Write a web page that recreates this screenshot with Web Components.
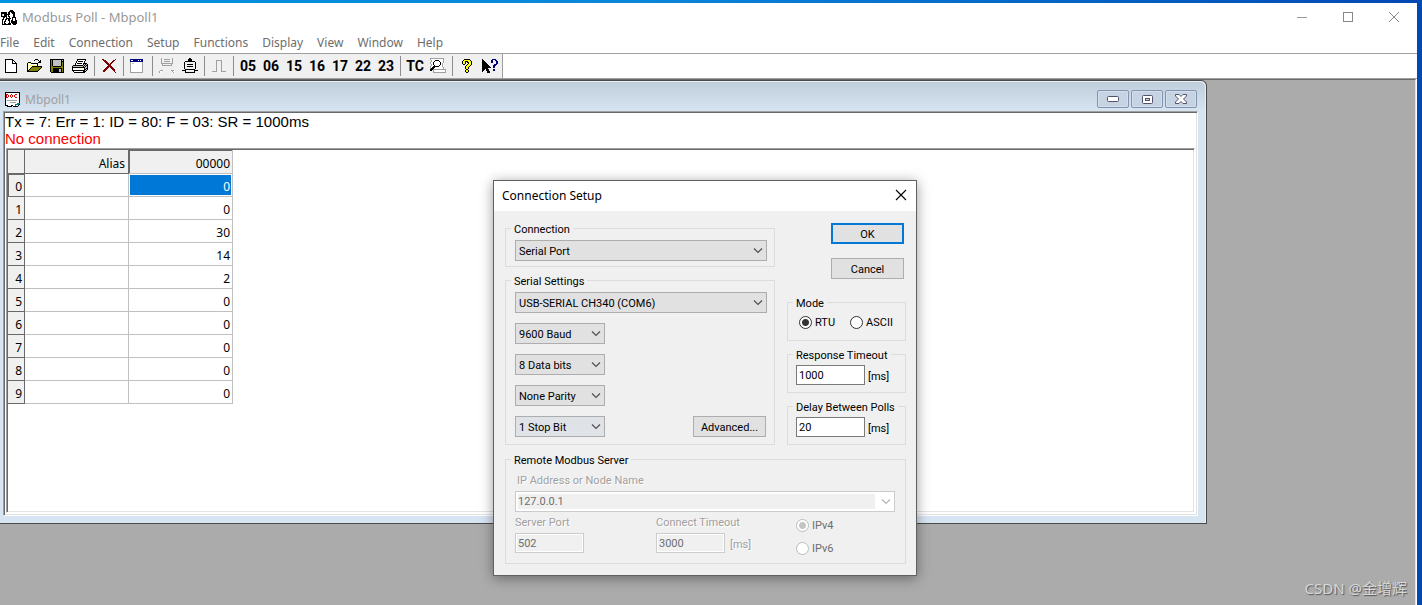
<!DOCTYPE html>
<html lang="en">
<head>
<meta charset="utf-8">
<title>Modbus Poll - Mbpoll1</title>
<style>
body {
  margin: 0;
  font-family: 'Noto Sans', 'Noto Sans CJK SC', sans-serif;
  font-size: 12px;
  color: #000;
  background: linear-gradient(90deg, #0093e0, #0a86da 45%, #0048b4);
}
</style>
</head>
<body>
<modbus-app></modbus-app>
<script>
// pixel icons: one letter per pixel
const COLORS = {k:'#000', w:'#fff', g:'#c0c0c0', d:'#a0a0a0', o:'#808000', y:'#ffff80', Y:'#ffff00', r:'#800000', R:'#e00000', b:'#000080', t:'#008080'}
const ICONS = {
  app: `
.........kkk....
........kkkkk...
kkkkkk.kk.kkkk..
kkkkkk.kk..kkk..
kgwkkkkkk...kk..
kgwkkk.k....kk..
kkkkkk.kk...kk..
..kk.k..k..kkkk.
..k..kkkkk.kwwk.
.kk.kk.kk..kwwk.
.k..k..kk.kkwwkk
.k.kk...k.kkkkkk
.k.k....k.kkkkkk
.k.kk..kkk.kkkkk
.kkkkkkkkk..kkk.`,
  create: `
kkkkkkkk....
kwwwwwwkk...
kwwwwwwkwk..
kwwwwwwkwwk.
kwwwwwwkkkkk
kwwwwwwwwwwk
kwwwwwwwwwwk
kwwwwwwwwwwk
kwwwwwwwwwwk
kwwwwwwwwwwk
kwwwwwwwwwwk
kwwwwwwwwwwk
kwwwwwwwwwwk
kkkkkkkkkkkk`,
  open: `
.........kkk....
........k...k.k.
.............kk.
..kkk.......kkk.
.kywykkkkkkk....
.kwywywywywk....
.kywywywywyk....
.kwywykkkkkkkkkk
.kywykoooooooook
.kwykoooooooook.
.kykoooooooook..
.kkoooooooook...
.kkkkkkkkkkk....`,
  save: `
kkkkkkkkkkkkkk
kokggggggggkgk
kokggggggggkkk
kokggggggggkok
kokggggggggkok
kokggggggggkok
kokggggggggkok
kookkkkkkkkook
kooooooooooook
kookkkkkkkkkok
kookkkkkkggkok
kookkkkkkggkok
kookkkkkkggkok
.kkkkkkkkkkkkk`,
  print: `
.....kkkkkkkkk..
.....kwwwwwwwk..
....kwkkkkkwk...
....kwwwwwwwk...
...kwkkkkkwkkkk.
...kwwwwwwwkgkgk
.kkkkkkkkkkgkgkk
kggggggggggkgkgk
kkkkkkkkkkkkkggk
kwwwwwwyyywwkgkk
kwwwwwwwwwwwkkgk
kkkkkkkkkkkkkgk.
.kwwwwwwwwwkkk..
..kkkkkkkkkkk...`,
  disconnect: `
rr...........r
.rrr.......rr.
..rrr.....rr..
...rrr...rr...
....rrr.rr....
.....rrrr.....
......rrr.....
.....rrrrr....
....rrr.rrr...
...rrr...rrr..
..rrr.....rrr.
.rrr.......rr.
.rr.........r.
.............r`,
  setup: `
bbbbbbbbbbbbb...
bwwbbbbbwbwbb...
bbbbbbbbbbbbb...
dwwwwwwwwwwwd...
dwggwwwwwwwwd...
dwwwwwwwwwwwd...
dwwwwwwwwwwwd...
dwwwwwwwwwwwd...
dwwwwwwwwwwwd...
dwwwwwwwwwwwd...
dwwwwwwwwwwwd...
dwwwwwwwwwwwd...
dwwwwwwwwwwwd...
ddddddddddddd...`,
  link: `
..d..........d..
..d..dddddd..d..
..d..........d..
..d..dddddd..d..
..d..........d..
..dddddddddddd..
...d........d...
...dddddddddd...
................
................
................
................
.ddd........ddd.
dww..........dww
dw............dw`,
  wire: `
.......kk.......
......kkkk......
......kkkk......
...kkkkkkkkkk...
..k..........k..
..k..........k..
..k..kkkkkk..k..
..k..........k..
..k..kkkkkk..k..
..k..........k..
..k..........k..
...kkkkkkkkkk...
kkkk........kkkk
...k........k...
...kkkkkkkkkk...`,
  pulse: `
....dddddd....
....d....d....
....d....d....
....d....d....
....d....d....
....d....d....
....d....d....
....d....d....
....d....d....
....d....d....
....d....d....
ddddd....ddddd`,
  preview: `
dddddddddddddd..
dwwwwwwwwwwwwd..
.dwwwkkkkwwwwd..
.dwwkwwwwkwwwd..
dwwkwwwwwwkwwd..
dwwkwwwwwwkwdw..
.dwkwwwwwwkwdw..
.dwwkwwwwkwwdw..
dwwkkkkkkwwwdw..
dwkkkwwwwwwwwd..
dkkkwwwwwwwwwd..
kkkddddddddddddd
kk.dwwwwwwwwwwwd
...dwwwwwwwwwwwd
...ddddddddddddd`,
  help: `
..kkkkkk..
.kYYYYYYk.
kYYkkkYYYk
kYYk.kkYYk
kYYk..kYYk
.kk..kYYYk
....kYYYk.
...kYYYk..
...kYYk...
...kYYk...
....kk....
...kYYk...
...kYYk...
....kk....`,
  context: `
k.........bbbb..
kk.......bb..bb.
kkk......bb...bb
kkkk.....bb...bb
kkkkk.........bb
kkkkkk......bbb.
kkkkkkk....bbb..
kkkkkkkk...bb...
kkkkkkkkk..bb...
kkkkkk..........
kkk.kkk....bb...
kk..kkk....bb...
k....kkk........
.....kkk........`,
  doc: `
kkkkkkkkkkkkkkk
kwwwwwwwwwwwwwk
kRRwwwRwwwRRwwk
kRwRwRwRwRwwwwk
kRwRwRwRwRwwwwk
kRRwwwRwwwRRwwk
kwwwwwwwwwwwwwk
kwwwwwwwwwwwwwk
kwddddddddddwwk
kwwwwwwwwwwwwwk
kwwwwddddddwwwk
kwwwwwwwwwwwttt
kwwwwwwwwwttttk
kkkwwwkkwwtwwk.
..kkkkk.kkkkk..`
}

const define = (name, html, render) => {
  customElements.define(name, class extends HTMLElement {
    constructor() { super()
      this.attachShadow({mode: 'open'})
    }
    connectedCallback(){
      this.shadowRoot.innerHTML = typeof html == 'function' ? html(this) : html
      if(render){ render(this) }
    }
  })
}

const attr = (el, name, d = '') => el.getAttribute(name) ?? d

define('pixel-icon', el => {
  let rows = ICONS[attr(el,'name')].trim().split('\n')
  let w = Math.max(...rows.map(r => r.length))
  let out = ''
  rows.forEach((row,y) => {
    for(let m of row.matchAll(/([a-zA-Z])\1*/g)){
      out += `<rect x="${m.index}" y="${y}" width="${m[0].length}" height="1" fill="${COLORS[m[1]]}"/>`
    }
  })
  return `
<style>
:host { display: inline-flex; flex: none; }
svg { display: block; }
</style>
<svg width="${w}" height="${rows.length}" shape-rendering="crispEdges" aria-hidden="true">${out}</svg>`
})

define('menu-bar', `
<style>
:host { display: flex; gap: 14px; height: 20px; color: #6d6d6d; }
button { font: inherit; color: inherit; border: 0; padding: 0; background: none; line-height: 18px; }
</style>
${['File','Edit','Connection','Setup','Functions','Display','View','Window','Help'].map(t => `<button>${t}</button>`).join('')}
`)

define('tool-button', el => `
<style>
:host { display: flex; width: 23px; }
button {
  display: flex;
  align-items: center;
  justify-content: center;
  width: 100%;
  padding: 0 1px 1px 0;
  border: 0;
  background: none;
  color: #000;
  font: bold 14px Roboto, sans-serif;
}
</style>
<button title="${attr(el,'label')}"><slot></slot></button>`)

define('tool-bar', `
<style>
:host { display: flex; border-top: 1px solid #a0a0a0; background: #fff; }
div { display: flex; height: 24px; background: #f0f0f0; border-right: 1px solid #a0a0a0; }
hr { width: 1px; height: 20px; margin: 2px 3px 2px 2px; border: 0; background: #8c8c8c; }
</style>
<div role="toolbar">
  <tool-button label="New"><pixel-icon name="create"></pixel-icon></tool-button>
  <tool-button label="Open"><pixel-icon name="open"></pixel-icon></tool-button>
  <tool-button label="Save"><pixel-icon name="save"></pixel-icon></tool-button>
  <tool-button label="Print"><pixel-icon name="print"></pixel-icon></tool-button>
  <hr>
  <tool-button label="Disconnect"><pixel-icon name="disconnect"></pixel-icon></tool-button>
  <hr>
  <tool-button label="Read/Write Definition"><pixel-icon name="setup"></pixel-icon></tool-button>
  <hr>
  <tool-button label="Connect"><pixel-icon name="link"></pixel-icon></tool-button>
  <tool-button label="Communication"><pixel-icon name="wire"></pixel-icon></tool-button>
  <hr>
  <tool-button label="Pulse"><pixel-icon name="pulse"></pixel-icon></tool-button>
  <hr>
  ${['05','06','15','16','17','22','23'].map(n => `<tool-button label="Function ${n}">${n}</tool-button>`).join('')}
  <hr>
  <tool-button label="Test Center">TC</tool-button>
  <tool-button label="Preview"><pixel-icon name="preview"></pixel-icon></tool-button>
  <hr>
  <tool-button label="About"><pixel-icon name="help"></pixel-icon></tool-button>
  <tool-button label="Help"><pixel-icon name="context"></pixel-icon></tool-button>
</div>
`)

define('register-grid', `
<style>
:host { display: block; }
table { border-collapse: separate; border-spacing: 0; table-layout: fixed; width: 225px; }
col.n { width: 17px; }
th, td {
  box-sizing: border-box;
  height: 23px;
  padding: 3px 2px 0 0;
  text-align: right;
  font-weight: normal;
  line-height: 19px;
  border: solid #c0c0c0;
  border-width: 0 1px 1px 0;
}
th { background: #f0f0f0; border-color: #696969; }
thead th { height: 24px; }
thead th:nth-child(2) { padding-right: 3px; }
thead th.on { border-color: #c0c0c0; box-shadow: inset 1px 1px #696969; }
tbody th.on { box-shadow: inset 1px 1px #696969; }
td.on { color: #fff; background: #0078d7; box-shadow: inset 0 0 0 1px #fff; }
</style>
<table>
  <colgroup><col class="n"><col><col></colgroup>
  <thead><tr><th></th><th>Alias</th><th class="on">00000</th></tr></thead>
  <tbody></tbody>
</table>
`, el => {
  let values = [0,0,30,14,2,0,0,0,0,0]
  el.shadowRoot.querySelector('tbody').innerHTML = values.map((v,i) => {
    let on = i == 0 ? ' class="on"' : ''
    return `<tr><th${on}>${i}</th><td></td><td${on}>${v}</td></tr>`
  }).join('')
})

define('poll-window', `
<style>
:host {
  display: flex;
  flex-direction: column;
  flex: 1;
  box-sizing: border-box;
  padding: 0 8px 7px 3px;
  border: solid #4a4a4a;
  border-width: 1px 1px 1px 0;
  border-top-right-radius: 6px;
  background: linear-gradient(#bfcddb, #d7e4f2 30px);
  box-shadow: inset -1px 1px #e9f0f8;
}
header { display: flex; align-items: center; height: 24px; padding: 6px 1px 0 2px; color: #a0a0a0; }
h2 { flex: 1; margin: 0 0 0 5px; font-size: 12px; font-weight: normal; }
nav { display: flex; gap: 2px; }
nav button {
  display: flex;
  align-items: center;
  justify-content: center;
  width: 32px;
  height: 18px;
  padding: 0;
  border: 1px solid #8394b0;
  border-radius: 2px;
  background: #c5d3e2;
  box-shadow: inset 0 0 0 1px #d3dfec;
}
.sunken {
  padding: 1px;
  border: 1px solid;
  border-color: #a0a0a0 #fff #fff #a0a0a0;
  background: #fff;
  box-shadow: inset 1px 1px #696969, inset -1px -1px #e3e3e3;
}
.client { display: flex; flex-direction: column; flex: 1; }
p { margin: 0; font: 15px/17px 'Liberation Sans', Arial, sans-serif; }
.error { color: #f00; }
.grid { flex: 1; margin: 1px; }
</style>
<header>
  <pixel-icon name="doc"></pixel-icon>
  <h2>Mbpoll1</h2>
  <nav>
    <button title="Minimize"><svg width="12" height="6"><rect x=".5" y=".5" width="11" height="5" rx="1" fill="#fff" stroke="#50536a"/></svg></button>
    <button title="Restore"><svg width="11" height="9"><rect x=".5" y=".5" width="10" height="8" rx="1" fill="#fff" stroke="#50536a"/><rect x="3.5" y="3.5" width="4" height="2" fill="#c5d3e2" stroke="#50536a"/></svg></button>
    <button title="Close"><svg width="12" height="10"><path d="M.5 .5h3.500l2 2 2-2h3.500v1.500l-3 3 3 3v1.500h-3.500l-2-2-2 2h-3.500v-1.500l3-3-3-3z" fill="#fff" stroke="#50536a"/></svg></button>
  </nav>
</header>
<div class="client sunken">
  <p>Tx = 7: Err = 1: ID = 80: F = 03: SR = 1000ms</p>
  <p class="error">No connection</p>
  <div class="grid sunken"><register-grid></register-grid></div>
</div>
`)

// framed group of controls
define('group-box', el => `
<style>
:host { display: block; }
fieldset { min-width: 0; margin: 0; padding: var(--pad, 4px 7px 5px 9px); border: 1px solid #dcdcdc; }
legend { height: 15px; margin-left: var(--legend, -4px); padding: 0 3px; line-height: 17px; }
</style>
<fieldset><legend>${attr(el,'label')}</legend><slot></slot></fieldset>`)

define('combo-box', el => {
  let off = el.hasAttribute('disabled')
  return `
<style>
:host { display: block; }
label { display: block; margin: 0 0 3px 2px; line-height: 15px; color: #a0a0a0; text-shadow: 1px 1px #fff; }
div { position: relative; }
select {
  display: block;
  box-sizing: border-box;
  width: 100%;
  height: 21px;
  margin: 0;
  padding: 1px 20px 0 3px;
  border: 1px solid #adadad;
  border-radius: 0;
  appearance: none;
  background: var(--face, #e1e1e1);
  color: #000;
  font: inherit;
}
select:disabled {
  padding: 0 20px 0 2px;
  border-color: #ccc;
  color: #6d6d6d;
  opacity: 1;
  background: #f0f0f0;
  box-shadow: inset 0 0 0 2px #fff, inset -19px 0 #fff;
}
svg { position: absolute; right: 4px; top: 7px; pointer-events: none; }
</style>
${off ? `<label for="s">${attr(el,'label')}</label>` : ''}
<div>
  <select id="s" aria-label="${attr(el,'label')}"${off ? ' disabled' : ''}><option>${attr(el,'value')}</option></select>
  <svg width="10" height="7"><path d="M1 1.5l4 4 4-4" fill="none" stroke="${off ? '#b4b4b4' : '#505050'}" stroke-width="1.2"/></svg>
</div>`
})

define('text-field', el => {
  let off = el.hasAttribute('disabled'), label = attr(el,'label'), unit = attr(el,'unit')
  return `
<style>
:host { display: block; }
label { display: block; margin-bottom: 3px; line-height: 15px; }
div { display: flex; align-items: center; gap: 3px; }
input {
  box-sizing: border-box;
  width: 69px;
  height: 20px;
  margin: 0;
  padding: 0 2px;
  border: 1px solid #7a7a7a;
  background: #fff;
  color: #000;
  font: inherit;
}
span { padding-top: 2px; }
:host([disabled]) { color: #a0a0a0; text-shadow: 1px 1px #fff; }
:host([disabled]) div { gap: 5px; }
input:disabled { border-color: #ccc; background: #f0f0f0; color: #6d6d6d; text-shadow: none; box-shadow: inset 0 0 0 1px #fff; }
</style>
${off ? `<label for="i">${label}</label>` : ''}
<div><input id="i" value="${attr(el,'value')}" aria-label="${label}"${off ? ' disabled' : ''}>${unit ? `<span>${unit}</span>` : ''}</div>`
})

define('radio-set', el => {
  let off = el.hasAttribute('disabled')
  return `
<style>
:host { display: flex; gap: 15px; }
:host([disabled]) { flex-direction: column; gap: 10px; color: #6d6d6d; }
label { display: flex; align-items: center; gap: 3px; height: 13px; }
input {
  box-sizing: border-box;
  width: 13px;
  height: 13px;
  margin: 0;
  border: 1px solid #333;
  border-radius: 50%;
  appearance: none;
  background: #fff;
}
input:checked { background: radial-gradient(circle, #333 3px, #fff 4px); }
input:disabled { border-color: #bcbcbc; }
input:disabled:checked { background: radial-gradient(circle, #c4c4c4 3px, #fff 4px); }
</style>
${attr(el,'options').split(',').map((t,i) =>
  `<label><input type="radio" name="r"${i ? '' : ' checked'}${off ? ' disabled' : ''}>${t}</label>`).join('')}`
})

define('push-button', `
<style>
:host { display: block; width: 73px; }
button {
  display: block;
  width: 100%;
  height: 21px;
  padding: 1px 0 0;
  border: 1px solid #adadad;
  background: #e1e1e1;
  color: #000;
  font: inherit;
}
:host([default]) button { border: 2px solid #0078d7; }
</style>
<button><slot></slot></button>
`)

define('connection-dialog', `
<style>
:host {
  display: block;
  box-sizing: border-box;
  width: 424px;
  border: 1px solid #606060;
  background: #f0f0f0;
  box-shadow: 0 2px 12px rgba(0,0,0,.4);
}
header { display: flex; align-items: center; justify-content: space-between; height: 28px; padding: 0 9px 2px 8px; background: #fff; }
h2 { margin: 0; font-size: 12px; font-weight: normal; }
header button { display: flex; padding: 0; border: 0; background: none; }
form {
  display: grid;
  grid-template-columns: 1fr 119px;
  gap: 7px 12px;
  padding: 10px 10px 11px 11px;
  font: 11px Roboto, sans-serif;
}
.left, .right { display: flex; flex-direction: column; gap: 6px; }
.buttons { display: flex; flex-direction: column; align-items: flex-end; gap: 14px; padding: 2px 2px 10px 0; }
.serial { --pad: 4px 7px 7px 9px; }
.rows { display: flex; flex-direction: column; gap: 10px; }
.rows combo-box:not(:first-child), .last combo-box:first-child { width: 90px; }
.last { display: flex; justify-content: space-between; align-items: flex-end; padding-right: 1px; }
.last combo-box { --face: #dfe3e8; }
.mode { --pad: 6px 0 11px 11px; --legend: -6px; }
.time { --pad: 3px 0 7px 8px; --legend: -3px; }
.remote { grid-column: 1 / -1; --pad: 6px 10px 8px 9px; }
.server { display: grid; grid-template-columns: 141px 140px 1fr; margin-top: 3px; }
.server radio-set { padding-top: 4px; }
</style>
<header>
  <h2>Connection Setup</h2>
  <button title="Close"><svg width="12" height="12"><path d="M1 1l10 10M11 1l-10 10" stroke="#000" stroke-width="1.1"/></svg></button>
</header>
<form onsubmit="return false">
  <div class="left">
    <group-box label="Connection"><combo-box label="Connection" value="Serial Port"></combo-box></group-box>
    <group-box class="serial" label="Serial Settings">
      <div class="rows">
        <combo-box label="Port" value="USB-SERIAL CH340 (COM6)"></combo-box>
        <combo-box label="Baud rate" value="9600 Baud"></combo-box>
        <combo-box label="Data bits" value="8 Data bits"></combo-box>
        <combo-box label="Parity" value="None Parity"></combo-box>
        <div class="last">
          <combo-box label="Stop bits" value="1 Stop Bit"></combo-box>
          <push-button>Advanced...</push-button>
        </div>
      </div>
    </group-box>
  </div>
  <div class="right">
    <div class="buttons">
      <push-button default>OK</push-button>
      <push-button>Cancel</push-button>
    </div>
    <group-box class="mode" label="Mode"><radio-set options="RTU,ASCII"></radio-set></group-box>
    <group-box class="time" label="Response Timeout"><text-field label="Response Timeout" value="1000" unit="[ms]"></text-field></group-box>
    <group-box class="time" label="Delay Between Polls"><text-field label="Delay Between Polls" value="20" unit="[ms]"></text-field></group-box>
  </div>
  <group-box class="remote" label="Remote Modbus Server">
    <combo-box disabled label="IP Address or Node Name" value="127.0.0.1"></combo-box>
    <div class="server">
      <text-field disabled label="Server Port" value="502"></text-field>
      <text-field disabled label="Connect Timeout" value="3000" unit="[ms]"></text-field>
      <radio-set disabled options="IPv4,IPv6"></radio-set>
    </div>
  </group-box>
</form>
`)

define('modbus-app', `
<style>
:host {
  display: flex;
  flex-direction: column;
  box-sizing: border-box;
  min-height: 100vh;
  padding: 3px 5px 0 0;
  position: relative;
}
.title { display: flex; align-items: center; height: 28px; padding: 0 17px 0 1px; background: #fff; color: #999; }
h1 { flex: 1; margin: 0 0 0 5px; font-size: 13px; font-weight: normal; }
nav { display: flex; gap: 34px; }
nav button { display: flex; padding: 0; border: 0; background: none; }
.menu { padding-top: 2px; background: #fff; }
.mdi { display: flex; flex: 1; padding: 1px 1px 0 0; background: linear-gradient(#a0a0a0 1px, #fff 1px); }
main {
  display: flex;
  flex: 1;
  padding: 0 208px 81px 0;
  border: solid;
  border-width: 1px 1px 0 0;
  border-color: #696969 #e3e3e3;
  background: #ababab;
}
connection-dialog { position: absolute; left: 493px; top: 180px; }
small {
  position: absolute;
  right: 15px;
  bottom: 7px;
  font-size: 15px;
  line-height: 20px;
  color: #d8d8d8;
  text-shadow: 1px 1px 1px #555;
}
</style>
<div class="title">
  <pixel-icon name="app"></pixel-icon>
  <h1>Modbus Poll - Mbpoll1</h1>
  <nav>
    <button title="Minimize"><svg width="12" height="12"><path d="M1 6.5h10" stroke="#999"/></svg></button>
    <button title="Maximize"><svg width="12" height="12"><rect x="1.5" y="1.5" width="9" height="9" fill="none" stroke="#888"/></svg></button>
    <button title="Close"><svg width="12" height="12"><path d="M1 1l10 10M11 1l-10 10" stroke="#888"/></svg></button>
  </nav>
</div>
<div class="menu"><menu-bar></menu-bar></div>
<tool-bar></tool-bar>
<div class="mdi"><main><poll-window></poll-window></main></div>
<connection-dialog></connection-dialog>
<small>CSDN @金增辉</small>
`)
</script>
</body>
</html>
